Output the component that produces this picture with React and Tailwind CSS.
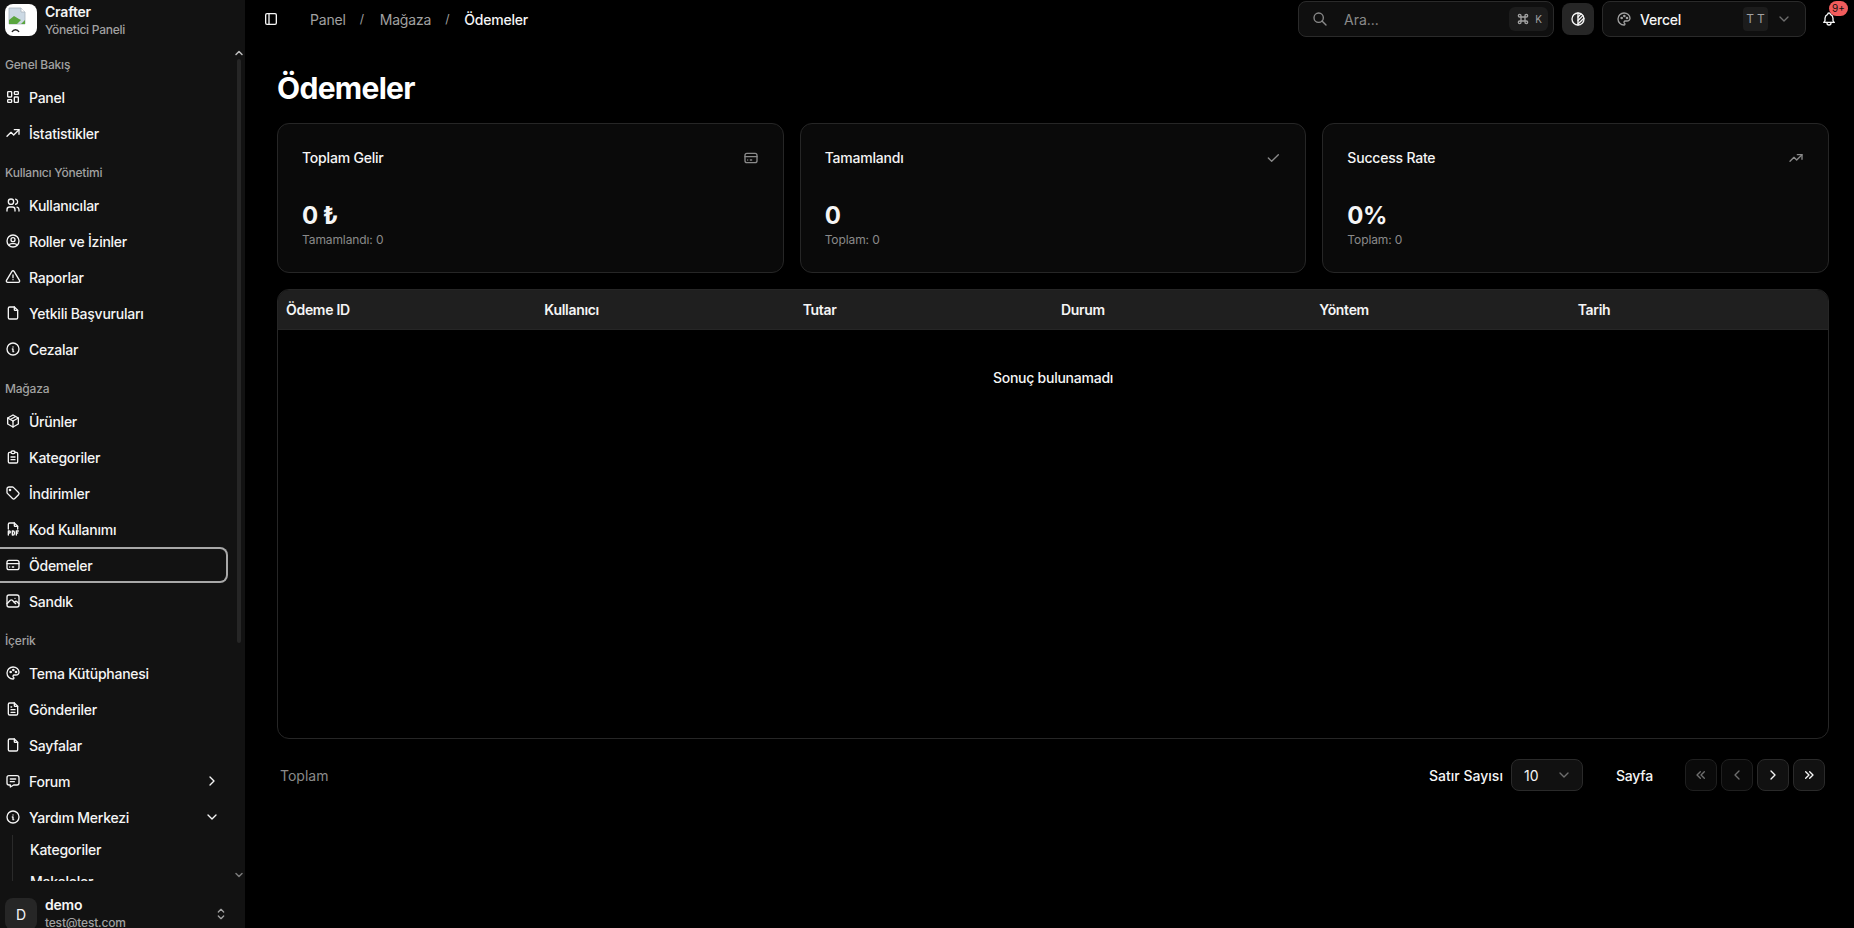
import React from "react";
import {
  TbLayoutDashboard, TbTrendingUp, TbUsers, TbUserCircle, TbAlertTriangle, TbFile, TbInfoCircle,
  TbPackage, TbClipboardText, TbTag, TbFileTypePdf, TbCreditCard, TbPhoto, TbPalette, TbFileText,
  TbMessage, TbChevronRight, TbChevronDown, TbChevronUp, TbSelector, TbLayoutSidebar, TbSearch, TbCommand,
  TbBrightness, TbBell, TbCheck, TbChevronsLeft, TbChevronLeft, TbChevronsRight,
} from "react-icons/tb";

const font = { fontFamily: "Inter, 'Noto Sans', sans-serif" };

function Item({ icon: I, label, after }) {
  return (
    <div className="flex h-9 items-center gap-2 pl-[5px] pr-[9px] text-[14px] font-[450] text-[#f5f5f5] tracking-[-0.25px]">
      <I className="size-[16px] shrink-0" />
      <span className="flex-1 truncate">{label}</span>
      {after}
    </div>
  );
}

function Group({ title, children, first }) {
  return (
    <div className={first ? "" : "mt-[7px]"}>
      <div className="flex h-[29px] items-center px-[5px] text-[12px] font-medium text-[#a1a1a1] tracking-[-0.2px]">{title}</div>
      <div className="flex flex-col">{children}</div>
    </div>
  );
}

function Sidebar() {
  return (
    <aside className="flex h-full w-[245px] shrink-0 flex-col overflow-hidden bg-[#121212]">
      <div className="flex h-[47px] shrink-0 gap-2 pl-[5px] pt-1">
        <div className="flex size-8 items-center justify-center overflow-hidden rounded-lg bg-white">
          <svg viewBox="0 0 32 32" className="size-8">
            <path d="M4 4h12l4 4v12H4z" fill="#ccd9e4" stroke="#a9b4bc" strokeWidth="0.8" />
            <path d="M16 4v4h4" fill="#fff" stroke="#a9b4bc" strokeWidth="0.8" />
            <path d="M4 20v-4l5-4 5 3 2 1-4 4z" fill="#5aa63e" />
            <path d="M16 20l4-4v4z" fill="#5aa63e" />
            <path d="M7 28c1.500-3 5.500-3 7 0" fill="none" stroke="#222" strokeWidth="1.400" />
          </svg>
        </div>
        <div className="flex flex-col">
          <span className="text-[14px] leading-[16px] font-semibold text-[#f5f5f5] tracking-[-0.2px]">Crafter</span>
          <span className="mt-0.5 text-[12px] leading-[16px] font-[450] text-[#a1a1a1] tracking-[-0.25px]">Yönetici Paneli</span>
        </div>
      </div>
      <div className="flex min-h-0 flex-1">
        <nav className="min-w-0 flex-1 overflow-hidden pt-[3px]">
          <Group first title="Genel Bakış">
            <Item icon={TbLayoutDashboard} label="Panel" />
            <Item icon={TbTrendingUp} label="İstatistikler" />
          </Group>
          <Group title="Kullanıcı Yönetimi">
            <Item icon={TbUsers} label="Kullanıcılar" />
            <Item icon={TbUserCircle} label="Roller ve İzinler" />
            <Item icon={TbAlertTriangle} label="Raporlar" />
            <Item icon={TbFile} label="Yetkili Başvuruları" />
            <Item icon={TbInfoCircle} label="Cezalar" />
          </Group>
          <Group title="Mağaza">
            <Item icon={TbPackage} label="Ürünler" />
            <Item icon={TbClipboardText} label="Kategoriler" />
            <Item icon={TbTag} label="İndirimler" />
            <Item icon={TbFileTypePdf} label="Kod Kullanımı" />
            <div className="mr-px rounded-r-lg border-2 border-l-0 border-[#a8a8a8]">
              <div className="flex h-[32px] items-center gap-2 pl-[5px] text-[14px] font-[450] text-[#f5f5f5] tracking-[-0.25px]">
                <TbCreditCard className="size-4" />
                <span>Ödemeler</span>
              </div>
            </div>
            <Item icon={TbPhoto} label="Sandık" />
          </Group>
          <Group title="İçerik">
            <Item icon={TbPalette} label="Tema Kütüphanesi" />
            <Item icon={TbFileText} label="Gönderiler" />
            <Item icon={TbFile} label="Sayfalar" />
            <Item icon={TbMessage} label="Forum" after={<TbChevronRight className="size-4" />} />
            <Item icon={TbInfoCircle} label="Yardım Merkezi" after={<TbChevronDown className="size-4" />} />
            <div className="ml-3 border-l border-[#2a2a2a] pl-[17px] text-[14px] font-[450] text-[#f5f5f5] tracking-[-0.25px]">
              <div className="flex h-7 items-center">Kategoriler</div>
              <div className="flex h-9 items-center">Makaleler</div>
            </div>
          </Group>
        </nav>
        <div className="flex w-[16px] shrink-0 flex-col items-center pl-[3px]">
          <TbChevronUp className="size-3 shrink-0 text-[#bdbdbd]" strokeWidth={3} />
          <div className="mb-[226px] w-[4px] flex-1 rounded-full bg-[#262626]" />
          <TbChevronDown className="size-3 shrink-0 text-[#7a7a7a]" strokeWidth={3} />
        </div>
      </div>
      <div className="flex h-[47px] shrink-0 items-start gap-2 pl-[5px] pr-[16px] pt-[17px]">
        <div className="flex size-8 shrink-0 items-center justify-center rounded-lg bg-[#262626] text-[14px] text-[#f5f5f5]">D</div>
        <div className="-mt-px flex min-w-0 flex-1 flex-col">
          <span className="text-[14px] leading-[16px] font-semibold text-[#f5f5f5] tracking-[-0.2px]">demo</span>
          <span className="mt-[2px] text-[12px] leading-[16px] font-[450] text-[#a1a1a1] tracking-[-0.2px]">test@test.com</span>
        </div>
        <TbSelector className="mt-2 size-4 text-[#a1a1a1]" />
      </div>
    </aside>
  );
}

function Header() {
  return (
    <header className="flex h-[38px] shrink-0 items-center pl-[18px] pr-[15px]">
      <TbLayoutSidebar className="size-4 text-[#f5f5f5]" />
      <div className="ml-[31px] flex items-center text-[14px] text-[#a1a1a1] tracking-[-0.2px]">
        <span>Panel</span>
        <span className="ml-[14px] mr-[16px] text-[12px]">/</span>
        <span>Mağaza</span>
        <span className="ml-[14px] mr-[15px] text-[12px]">/</span>
        <span className="font-medium text-[#f5f5f5]">Ödemeler</span>
      </div>
      <div className="ml-auto flex items-center gap-2">
        <div className="flex h-[36px] w-[256px] items-center rounded-lg border border-[#2a2a2a] bg-[#0f0f0f] pl-[13px] pr-[5px] text-[14px] text-[#8a8a8a]">
          <TbSearch className="size-4" />
          <span className="ml-[16px] flex-1">Ara...</span>
          <span className="flex h-[24px] items-center gap-1 rounded-md bg-[#1c1c1c] px-[6px] text-[10px] text-[#a1a1a1]">
            <TbCommand className="size-4" /> K
          </span>
        </div>
        <div className="flex h-[32px] w-[32px] items-center justify-center rounded-lg bg-[#262626] text-[#f5f5f5]">
          <TbBrightness className="size-4" />
        </div>
        <div className="flex h-[36px] w-[204px] items-center rounded-lg border border-[#2a2a2a] bg-[#0f0f0f] pl-[13px] pr-[13px]">
          <TbPalette className="size-4 text-[#a1a1a1]" />
          <span className="ml-[8px] flex-1 text-[14px] font-medium text-[#f5f5f5] tracking-[-0.2px]">Vercel</span>
          <span className="flex h-[24px] w-[25px] items-center justify-center rounded bg-[#1c1c1c] pl-[3px] text-[12px] tracking-[3px] text-[#a1a1a1]">TT</span>
          <TbChevronDown className="ml-[8px] size-4 text-[#6e6e6e]" />
        </div>
        <div className="relative ml-[5px] flex size-[20px] items-center justify-center">
          <TbBell className="size-4 text-[#f5f5f5]" />
          <span className="absolute -right-[9px] -top-[8px] flex h-[15px] w-[19px] items-center justify-center rounded-full bg-[#f25c5c] text-[10px] text-[#111]">9+</span>
        </div>
      </div>
    </header>
  );
}

function Card({ title, icon: I, value, sub }) {
  return (
    <div className="flex h-[150px] flex-col rounded-xl border border-[#262626] bg-[#0a0a0a] px-6 pt-[24px]">
      <div className="flex items-center justify-between">
        <span className="text-[14px] leading-[20px] font-medium text-[#f5f5f5] tracking-[-0.2px]">{title}</span>
        <I className="size-4 text-[#8a8a8a]" />
      </div>
      <div className="mt-[32px] text-[24px] leading-[32px] font-bold text-[#f5f5f5] tracking-[-0.6px]">{value}</div>
      <div className="text-[12px] leading-[16px] text-[#8a8a8a] tracking-[-0.1px]">{sub}</div>
    </div>
  );
}

const cols = ["Ödeme ID", "Kullanıcı", "Tutar", "Durum", "Yöntem", "Tarih"];

function PageBtn({ icon: I, dim }) {
  return (
    <div className={`flex size-8 items-center justify-center rounded-lg border ${dim ? "border-[#1f1f1f] bg-[#0a0a0a] text-[#6e6e6e]" : "border-[#2a2a2a] bg-[#111111] text-[#f5f5f5]"}`}>
      <I className="size-4" />
    </div>
  );
}

export default function App() {
  return (
    <div style={font} className="flex h-[928px] w-full overflow-hidden bg-black">
      <Sidebar />
      <div className="flex min-w-0 flex-1 flex-col">
        <Header />
        <main className="flex flex-1 flex-col pl-8 pr-[25px]">
          <h1 className="mt-[31px] text-[30px] leading-[38px] font-bold text-white tracking-[-0.7px]">Ödemeler</h1>
          <div className="mt-[16px] grid grid-cols-3 gap-4">
            <Card title="Toplam Gelir" icon={TbCreditCard} value="0 ₺" sub="Tamamlandı: 0" />
            <Card title="Tamamlandı" icon={TbCheck} value="0" sub="Toplam: 0" />
            <Card title="Success Rate" icon={TbTrendingUp} value="0%" sub="Toplam: 0" />
          </div>
          <div className="mt-[16px] flex h-[450px] flex-col overflow-hidden rounded-xl border border-[#262626]">
            <div className="grid h-[40px] shrink-0 grid-cols-6 items-center border-b border-[#262626] bg-[#1f1f1f]">
              {cols.map((c) => (
                <div key={c} className="px-2 text-[14px] font-semibold text-[#f5f5f5] tracking-[-0.3px]">{c}</div>
              ))}
            </div>
            <div className="flex h-[94px] items-center justify-center text-[14px] font-[450] text-[#f5f5f5] tracking-[-0.25px]">Sonuç bulunamadı</div>
          </div>
          <div className="mt-[20px] flex items-center pl-[3px] pr-[4px]">
            <span className="text-[14px] text-[#8a8a8a]">Toplam</span>
            <div className="ml-auto flex items-center">
              <span className="text-[14px] font-medium text-[#f5f5f5]">Satır Sayısı</span>
              <div className="ml-2 flex h-8 w-[72px] items-center justify-between rounded-lg border border-[#2a2a2a] bg-[#111111] pl-3 pr-[10px] text-[14px] text-[#f5f5f5]">
                10
                <TbChevronDown className="size-4 text-[#6e6e6e]" />
              </div>
              <span className="ml-[33px] text-[14px] font-medium text-[#f5f5f5] tracking-[-0.2px]">Sayfa</span>
              <div className="ml-[32px] flex gap-1">
                <PageBtn icon={TbChevronsLeft} dim />
                <PageBtn icon={TbChevronLeft} dim />
                <PageBtn icon={TbChevronRight} />
                <PageBtn icon={TbChevronsRight} />
              </div>
            </div>
          </div>
        </main>
      </div>
    </div>
  );
}
